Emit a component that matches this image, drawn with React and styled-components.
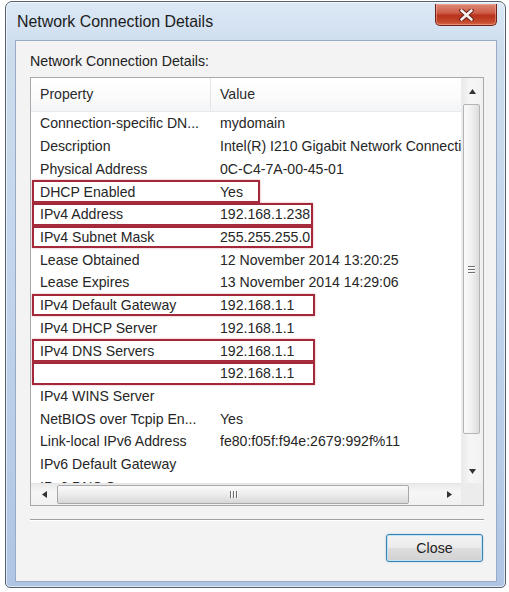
import React from "react";
import styled, { createGlobalStyle } from "styled-components";

const GlobalStyle = createGlobalStyle`
  html, body {
    margin: 0;
    padding: 0;
    background: #ffffff;
  }
  body {
    font-family: "Liberation Sans", Arial, sans-serif;
    color: #222;
  }
`;

const rows = [
  { p: "Connection-specific DN...", v: "mydomain" },
  { p: "Description", v: "Intel(R) I210 Gigabit Network Connection" },
  { p: "Physical Address", v: "0C-C4-7A-00-45-01" },
  { p: "DHCP Enabled", v: "Yes", mark: 228 },
  { p: "IPv4 Address", v: "192.168.1.238", mark: 281 },
  { p: "IPv4 Subnet Mask", v: "255.255.255.0", mark: 281 },
  { p: "Lease Obtained", v: "12 November 2014 13:20:25" },
  { p: "Lease Expires", v: "13 November 2014 14:29:06" },
  { p: "IPv4 Default Gateway", v: "192.168.1.1", mark: 283 },
  { p: "IPv4 DHCP Server", v: "192.168.1.1" },
  { p: "IPv4 DNS Servers", v: "192.168.1.1", mark: 283 },
  { p: "", v: "192.168.1.1", mark: 283 },
  { p: "IPv4 WINS Server", v: "" },
  { p: "NetBIOS over Tcpip En...", v: "Yes" },
  { p: "Link-local IPv6 Address", v: "fe80:f05f:f94e:2679:992f%11" },
  { p: "IPv6 Default Gateway", v: "" },
  { p: "IPv6 DNS Servers", v: "" },
];

function Arrow({ dir }) {
  const pts = {
    up: "0,5 3.5,0 7,5",
    down: "0,0 3.5,5 7,0",
    left: "5,0 0,3.5 5,7",
    right: "0,0 5,3.5 0,7",
  }[dir];
  const horiz = dir === "left" || dir === "right";
  return (
    <svg width={horiz ? 5 : 7} height={horiz ? 7 : 5} viewBox={horiz ? "0 0 5 7" : "0 0 7 5"}>
      <polygon points={pts} fill="#333" />
    </svg>
  );
}

export default function App() {
  return (
    <>
      <GlobalStyle />
      <Window>
        <TitleBar>
          <Title>Network Connection Details</Title>
          <CloseX>
            <svg width="15" height="12" viewBox="0 0 15 12">
              <path d="M2.5 1.5 L12.5 10.5 M12.5 1.5 L2.5 10.5" stroke="#6a1f16" strokeWidth="4.6" strokeLinecap="round" />
              <path d="M2.5 1.5 L12.5 10.5 M12.5 1.5 L2.5 10.5" stroke="#f4f0ee" strokeWidth="2.6" strokeLinecap="round" />
            </svg>
          </CloseX>
        </TitleBar>
        <Client>
          <Label>Network Connection Details:</Label>
          <ListBox>
            <Content>
              <Header>
                <HeadCell divider>Property</HeadCell>
                <HeadCell>Value</HeadCell>
              </Header>
              {rows.map((r, i) => (
                <Row key={i}>
                  <Cell>{r.p}</Cell>
                  <Cell>{r.v}</Cell>
                  {r.mark && <Marker style={{ width: r.mark }} />}
                </Row>
              ))}
            </Content>
            <VScroll>
              <ArrowBox>
                <Arrow dir="up" />
              </ArrowBox>
              <VTrack>
                <VThumb>
                  <Grip vertical>
                    <span />
                    <span />
                    <span />
                  </Grip>
                </VThumb>
              </VTrack>
              <ArrowBox>
                <Arrow dir="down" />
              </ArrowBox>
            </VScroll>
            <HScroll>
              <ArrowBox>
                <Arrow dir="left" />
              </ArrowBox>
              <HTrack>
                <HThumb>
                  <Grip>
                    <span />
                    <span />
                    <span />
                  </Grip>
                </HThumb>
              </HTrack>
              <ArrowBox>
                <Arrow dir="right" />
              </ArrowBox>
            </HScroll>
            <Corner />
          </ListBox>
          <Separator />
          <ButtonRow>
            <DialogButton>Close</DialogButton>
          </ButtonRow>
        </Client>
      </Window>
    </>
  );
}

const Window = styled.div`
  margin: 1px 3px 0 5px;
  height: 587px;
  box-sizing: border-box;
  border: 1px solid #55616f;
  border-radius: 7px 7px 5px 5px;
  background: linear-gradient(180deg, #dce8f6 0%, #cddded 8%, #c1d4eb 50%, #aec6e4 100%);
  display: flex;
  flex-direction: column;
  box-shadow: inset 0 0 0 1px rgba(255, 255, 255, 0.6);
`;

const TitleBar = styled.div`
  height: 38px;
  display: flex;
  align-items: center;
  justify-content: space-between;
  padding: 0 8px 0 11px;
`;

const Title = styled.div`
  font-size: 15.9px;
  color: #1b1b1b;
  margin-top: 1px;
`;

const CloseX = styled.div`
  align-self: flex-start;
  margin-top: 2px;
  width: 62px;
  height: 22px;
  box-sizing: border-box;
  border: 1px solid #6e2219;
  border-top: none;
  border-radius: 0 0 5px 5px;
  background: linear-gradient(180deg, #dc8a78 0%, #cf5d47 42%, #b8321c 55%, #c5492c 85%, #d66a4c 100%);
  box-shadow: inset 0 0 0 1px rgba(255, 190, 175, 0.45);
  display: flex;
  align-items: center;
  justify-content: center;
`;

const Client = styled.div`
  flex: 1;
  margin: 0 8px 5px 9px;
  background: #f3f3f3;
  border: 1px solid #97abc4;
  padding: 12px 12px 0 14px;
  display: flex;
  flex-direction: column;
`;

const Label = styled.div`
  font-size: 14.2px;
  line-height: 17px;
  margin-bottom: 7px;
`;

const ListBox = styled.div`
  height: 429px;
  box-sizing: border-box;
  border: 1px solid #a5a9ae;
  background: #ffffff;
  display: grid;
  grid-template-columns: 1fr 22px;
  grid-template-rows: 1fr 22px;
`;

const Content = styled.div`
  overflow: hidden;
  min-width: 0;
  font-size: 14.1px;
`;

const Header = styled.div`
  height: 34px;
  box-sizing: border-box;
  display: grid;
  grid-template-columns: 180px 1fr;
  background: linear-gradient(180deg, #ffffff 0%, #fbfbfc 60%, #f3f4f6 100%);
  border-bottom: 1px solid #e8eaed;
`;

const HeadCell = styled.div`
  display: flex;
  align-items: center;
  padding-left: 9px;
  padding-bottom: 1px;
  border-right: ${(p) => (p.divider ? "1px solid #e3e5e8" : "none")};
  color: #2a2a2a;
`;

const Row = styled.div`
  position: relative;
  height: 22.73px;
  display: grid;
  grid-template-columns: 180px 1fr;
  align-items: center;
  white-space: nowrap;
`;

const Cell = styled.div`
  padding-left: 9px;
  color: #262626;
`;

const Marker = styled.div`
  position: absolute;
  left: 1px;
  top: 0;
  bottom: 0;
  box-sizing: border-box;
  border: 2px solid #a3283a;
  box-shadow: 0 0 2px rgba(200, 80, 100, 0.5);
  pointer-events: none;
`;

const VScroll = styled.div`
  grid-row: 1;
  grid-column: 2;
  display: grid;
  grid-template-rows: 26px 1fr 24px;
  background: linear-gradient(90deg, #eaeaea 0%, #f6f6f6 40%, #f1f1f1 100%);
  border-left: 1px solid #ececec;
`;

const HScroll = styled.div`
  grid-row: 2;
  grid-column: 1;
  display: grid;
  grid-template-columns: 26px 1fr 24px;
  background: linear-gradient(180deg, #eaeaea 0%, #f6f6f6 40%, #f1f1f1 100%);
  border-top: 1px solid #e4e4e4;
`;

const Corner = styled.div`
  grid-row: 2;
  grid-column: 2;
  background: #ececec;
`;

const ArrowBox = styled.div`
  display: flex;
  align-items: center;
  justify-content: center;
`;

const VTrack = styled.div`
  display: flex;
  flex-direction: column;
  padding: 0 3px 0 1px;
`;

const HTrack = styled.div`
  display: flex;
  align-items: center;
`;

const VThumb = styled.div`
  height: 330px;
  box-sizing: border-box;
  border: 1px solid #b4b4b4;
  border-radius: 2px;
  background: linear-gradient(90deg, #fafafa 0%, #f0f0f0 50%, #dcdcdc 100%);
  display: flex;
  align-items: center;
  justify-content: center;
`;

const HThumb = styled.div`
  width: 352px;
  height: 19px;
  box-sizing: border-box;
  border: 1px solid #a8a8a8;
  border-radius: 2px;
  background: linear-gradient(180deg, #fafafa 0%, #eeeeee 45%, #d8d8d8 100%);
  display: flex;
  align-items: center;
  justify-content: center;
`;

const Grip = styled.div`
  display: flex;
  flex-direction: ${(p) => (p.vertical ? "column" : "row")};
  gap: 2px;
  span {
    display: block;
    width: ${(p) => (p.vertical ? "7px" : "1px")};
    height: ${(p) => (p.vertical ? "1px" : "7px")};
    background: #6e6e6e;
    box-shadow: ${(p) => (p.vertical ? "0 1px 0 #fff" : "1px 0 0 #fff")};
  }
`;

const Separator = styled.div`
  margin-top: 13px;
  border-top: 1px solid #a0a0a0;
  border-bottom: 1px solid #ffffff;
`;

const ButtonRow = styled.div`
  display: flex;
  justify-content: flex-end;
  margin-top: 13px;
  padding-right: 1px;
`;

const DialogButton = styled.button`
  width: 97px;
  height: 28px;
  border: 1px solid #3c7fb1;
  border-radius: 3px;
  background: linear-gradient(180deg, #f4f4f4 0%, #ebebeb 48%, #dddddd 52%, #d2d2d2 100%);
  box-shadow: inset 0 0 0 1px #bfe3f7, 0 0 2px rgba(80, 160, 210, 0.5);
  font-family: "Liberation Sans", Arial, sans-serif;
  font-size: 14.2px;
  color: #222;
  padding: 0;
`;
